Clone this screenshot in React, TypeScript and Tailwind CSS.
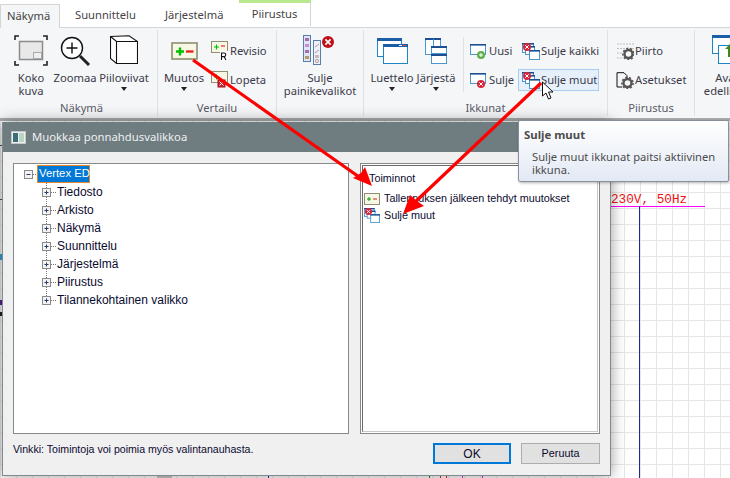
import React from "react";

const ui = "font-['Noto_Sans',sans-serif]";

function Gear({ x, y, r = 4 }: { x: number; y: number; r?: number }) {
  return (
    <g>
      <circle cx={x} cy={y} r={r} fill="none" stroke="#555" strokeWidth={2.4} />
      <circle cx={x} cy={y} r={r + 1.6} fill="none" stroke="#555" strokeWidth={1.6} strokeDasharray="2 1.9" />
    </g>
  );
}

function MiniWin({ x, y, w, h, bar = "#1b4f91" }: { x: number; y: number; w: number; h: number; bar?: string }) {
  return (
    <g>
      <rect x={x + 0.5} y={y + 0.5} width={w} height={h} fill="#fff" stroke="#4a97cc" />
      <rect x={x} y={y} width={w + 1} height={1.6} fill={bar} />
    </g>
  );
}

function Dot({ x, y, c }: { x: number; y: number; c: string }) {
  return (
    <g>
      <circle cx={x} cy={y} r={4} fill={c} />
      <path d={c === "#5fb04a" ? `M${x - 2} ${y}h4M${x} ${y - 2}v4` : `M${x - 1.8} ${y - 1.8}l3.6 3.6M${x + 1.8} ${y - 1.8}l-3.6 3.6`} stroke="#fff" strokeWidth={1} />
    </g>
  );
}

function KokoIcon() {
  return (
    <svg width="34" height="31" viewBox="0 0 34 31" fill="none">
      <path d="M1 5V1h4M29 1h4v4M1 26v4h4M29 30h4v-4" stroke="#222" strokeWidth="1.6" />
      <rect x="5.5" y="6.5" width="23" height="18" fill="#e8e8e8" stroke="#8c8c8c" strokeWidth="1.5" />
      <rect x="19.5" y="17.5" width="8" height="6" fill="#eee" stroke="#aaa" />
    </svg>
  );
}
function ZoomIcon() {
  return (
    <svg width="32" height="32" viewBox="0 0 32 32" fill="none">
      <circle cx="13" cy="13" r="10.5" stroke="#111" strokeWidth="1.4" fill="#fff" />
      <path d="M7.5 13h11M13 7.5v11" stroke="#111" strokeWidth="1.4" />
      <path d="M21 21l9 9" stroke="#222" strokeWidth="3" />
    </svg>
  );
}
function CubeIcon() {
  return (
    <svg width="28" height="30" viewBox="0 0 28 30" fill="none">
      <path d="M.5 1.5L19 .7L27.5 6.5V28.5H6.5L.5 23.5Z" fill="#fff" stroke="#111" strokeWidth="1.1" />
      <path d="M.5 1.5L6.5 6.5H27.5M6.5 6.5V28.5" stroke="#111" strokeWidth="1.1" />
    </svg>
  );
}
function MuutosIcon() {
  return (
    <svg width="27" height="18" viewBox="0 0 27 18" fill="none">
      <rect x="1" y="1" width="25" height="16" fill="#f7f7e6" stroke="#8e8e70" strokeWidth="1.6" />
      <path d="M5 9.5h8M9 5.5v8" stroke="#00c000" strokeWidth="2.4" />
      <path d="M15 9.5h7.5" stroke="#ee2020" strokeWidth="2.4" />
    </svg>
  );
}
function RevisioIcon() {
  return (
    <svg width="18" height="20" viewBox="0 0 18 20" fill="none">
      <rect x=".5" y=".5" width="16" height="11" fill="#f7f7e6" stroke="#8e8e70" />
      <path d="M3 6h5M5.5 3.5v5" stroke="#00c000" strokeWidth="1.2" />
      <path d="M10 5h4" stroke="#ee2020" strokeWidth="1.2" />
      <rect x="9" y="10" width="8" height="10" fill="#fff" />
      <path d="M10.5 19v-7h2.5a1.8 1.8 0 010 3.6h-2.5M13 15.5l2 3.5" stroke="#111" strokeWidth="1.1" />
    </svg>
  );
}
function LopetaIcon() {
  return (
    <svg width="18" height="18" viewBox="0 0 18 18" fill="none">
      <rect x=".5" y=".5" width="16" height="11" fill="#f7f7e6" stroke="#8e8e70" />
      <path d="M3 6h5M5.5 3.5v5" stroke="#00c000" strokeWidth="1.2" />
      <rect x="7" y="9" width="7" height="7" fill="#d22030" stroke="#a01020" />
      <path d="M8.5 10.5l4 4M12.5 10.5l-4 4" stroke="#fff" />
    </svg>
  );
}
function PainikeIcon() {
  return (
    <svg width="34" height="30" viewBox="0 0 34 30" fill="none">
      <rect x=".5" y=".5" width="7" height="26" fill="#dfe6f3" stroke="#5a7ea8" />
      <rect x="2" y="3" width="4" height="3" fill="#a96ab0" />
      <rect x="2" y="9" width="4" height="3" fill="#c88ad0" />
      <rect x="2" y="15" width="4" height="3" fill="#a96ab0" />
      <rect x="2" y="21" width="4" height="3" fill="#b49a70" />
      <rect x="10.5" y="5.5" width="7" height="24" fill="#eef1f7" stroke="#5a7ea8" />
      <path d="M12 12l4-3M12 18l4-3" stroke="#b09a9a" />
      <rect x="12" y="20" width="4" height="3" fill="#c9b9b9" />
      <circle cx="14" cy="26" r="1.6" stroke="#b09a9a" fill="none" />
      <circle cx="25" cy="7" r="6" fill="#c01018" />
      <path d="M22.4 4.4l5.2 5.2M27.6 4.4l-5.2 5.2" stroke="#fff" strokeWidth="1.6" />
    </svg>
  );
}
function LuetteloIcon() {
  return (
    <svg width="31" height="26" viewBox="0 0 31 26" fill="none">
      <rect x=".5" y=".5" width="24" height="18" fill="#fff" stroke="#1d84c6" />
      <rect x="0" y="0" width="25" height="3" fill="#1b5ea8" />
      <rect x="6.5" y="6.5" width="24" height="19" fill="#fff" stroke="#1d84c6" />
      <rect x="6" y="6" width="25" height="3" fill="#1b5ea8" />
      <rect x="22" y="7" width="3" height="1" fill="#fff" />
      <rect x="26" y="7" width="3" height="1" fill="#e44" />
    </svg>
  );
}
function JarjestaIcon() {
  return (
    <svg width="22" height="26" viewBox="0 0 22 26" fill="none">
      <rect x=".5" y=".5" width="15" height="16" fill="#fff" stroke="#4a97cc" />
      <rect x="0" y="0" width="16" height="2" fill="#1b4f91" />
      <path d="M8.5 1v15" stroke="#4a97cc" />
      <rect x="6.5" y="8.5" width="15" height="7" fill="#fff" stroke="#4a97cc" />
      <rect x="6" y="8" width="16" height="2" fill="#1b4f91" />
      <rect x="6.5" y="16.5" width="15" height="9" fill="#fff" stroke="#4a97cc" />
      <rect x="6" y="16" width="16" height="2" fill="#1b4f91" />
    </svg>
  );
}
function WinDot({ c }: { c: string }) {
  return (
    <svg width="18" height="17" viewBox="0 0 18 17" fill="none">
      <MiniWin x={0} y={1} w={15} h={10} />
      <Dot x={11} y={12} c={c} />
    </svg>
  );
}
function CloseStack() {
  return (
    <svg width="18" height="17" viewBox="0 0 18 17" fill="none" className="shrink-0">
      <MiniWin x={0} y={0} w={11} h={9} />
      <MiniWin x={3} y={3} w={9} h={8} />
      <MiniWin x={7} y={7} w={10} h={9} />
      <Dot x={5} y={4} c="#d8253a" />
    </svg>
  );
}
function PiirtoIcon() {
  return (
    <svg width="17" height="17" viewBox="0 0 17 17" fill="none">
      <path d="M.5 1h16M.5 5.5h16M.5 10h6M.5 15h4" stroke="#888" strokeDasharray="1 2" />
      <Gear x={11.5} y={11} />
    </svg>
  );
}
function AsetusIcon() {
  return (
    <svg width="18" height="17" viewBox="0 0 18 17" fill="none">
      <path d="M1 15V.7h7l3 3v3M1 15h5" stroke="#111" fill="none" />
      <Gear x={11.5} y={11} />
    </svg>
  );
}
function AvaaIcon() {
  return (
    <svg width="34" height="30" viewBox="0 0 34 30" fill="none">
      <rect x=".5" y=".5" width="24" height="18" fill="#fff" stroke="#1d84c6" />
      <rect x="0" y="0" width="25" height="3" fill="#1b5ea8" />
      <rect x="6.5" y="10.5" width="20" height="18" fill="#fff" stroke="#1d84c6" />
      <path d="M13 14l6-6 6 6h-3v8h-6v-8z" fill="#3a8a1a" />
    </svg>
  );
}

function Caret() {
  return <div className="mt-[3px] h-0 w-0 border-x-[3.5px] border-t-[4px] border-x-transparent border-t-[#222]" />;
}

function Large({ w, icon, lines, caret }: { w: string; icon: React.ReactNode; lines: string[]; caret?: boolean }) {
  return (
    <div className={`flex flex-col items-center ${w}`}>
      <div className="flex h-[36px] items-start justify-center overflow-visible">{icon}</div>
      {lines.map((l) => (
        <div key={l} className="h-[13px] whitespace-nowrap text-[11.2px] leading-[13px] text-[#3a3a4a]">
          {l}
        </div>
      ))}
      {caret && <Caret />}
    </div>
  );
}

function Small({ icon, label, active, pad = "pl-0" }: { icon: React.ReactNode; label: string; active?: boolean; pad?: string }) {
  return (
    <div className={`flex h-[22px] items-center gap-[1px] whitespace-nowrap text-[11.2px] text-[#3a3a4a] ${pad} ${active ? "border border-[#a9cdf0] bg-[#e6f0fa]" : "border border-transparent"}`}>
      <span className="flex w-[18px] shrink-0 items-center justify-center">{icon}</span>
      <span>{label}</span>
    </div>
  );
}

function Group({ w, label, children }: { w: string; label?: string; children: React.ReactNode }) {
  return (
    <div className={`flex h-[86px] shrink-0 flex-col border-r border-[#dfe2e5] ${w}`}>
      <div className="flex h-[72px] pt-[5px]">{children}</div>
      <div className="pt-[3px] text-center text-[11.2px] leading-[16px] text-[#5b5b68]">{label}</div>
    </div>
  );
}

function SmallCol({ w, children }: { w: string; children: React.ReactNode }) {
  return <div className={`flex flex-col gap-[7px] pt-[5px] ${w}`}>{children}</div>;
}

function Tab({ label, className }: { label: string; className: string }) {
  return <div className={`flex h-[23px] items-center text-[11.2px] text-[#444] ${className}`}>{label}</div>;
}

function Expander({ open, child, last }: { open?: boolean; child?: boolean; last?: boolean }) {
  return (
    <svg width="15" height="18" viewBox="0 0 15 18" fill="none" className="shrink-0">
      {child && <path d={last ? "M4.5 0v9" : "M4.5 0v18"} stroke="#777" strokeDasharray="1 1" />}
      <path d="M9 9.5h6" stroke="#777" strokeDasharray="1 1" />
      <rect x=".5" y="5.5" width="8" height="8" fill="#f3f3f3" stroke="#8a8a8a" />
      <path d="M2.5 9.5h4" stroke="#2a3a6a" />
      {!open && <path d="M4.5 7.5v4" stroke="#2a3a6a" />}
    </svg>
  );
}

const treeItems = ["Tiedosto", "Arkisto", "Näkymä", "Suunnittelu", "Järjestelmä", "Piirustus", "Tilannekohtainen valikko"];

export default function App() {
  return (
    <div className={`relative h-[478px] w-[730px] overflow-hidden bg-white bg-[linear-gradient(to_right,#e6e6e6_1px,transparent_1px),linear-gradient(to_bottom,#e6e6e6_1px,transparent_1px)] bg-[length:16px_16px] ${ui}`}>
      {/* Tab strip */}
      <div className="flex h-[28px] items-end border-b border-[#d5d5d5] bg-white">
        <Tab label="Näkymä" className="relative -mb-px h-[24px] w-[60px] border-x border-t border-[#d5d5d5] bg-[#f5f6f7] pl-[6px]" />
        <Tab label="Suunnittelu" className="ml-[15px] w-[90px]" />
        <Tab label="Järjestelmä" className="w-[74px]" />
        <div className="h-[28px] w-[72px] border-t-[4px] border-[#b9e88f] bg-white">
          <Tab label="Piirustus" className="h-[23px] justify-center border-r border-[#d5d5d5]" />
        </div>
      </div>

      {/* Ribbon */}
      <div className="flex h-[93px] border-b-[3px] border-[#a9acae] bg-[#f5f6f7] pl-[6px] pt-[2px]">
        <Group w="w-[152px]" label="Näkymä">
          <Large w="w-[50px]" icon={<KokoIcon />} lines={["Koko", "kuva"]} />
          <Large w="w-[38px]" icon={<ZoomIcon />} lines={["Zoomaa"]} />
          <Large w="w-[60px]" icon={<CubeIcon />} lines={["Piiloviivat"]} caret />
        </Group>
        <Group w="w-[119px]" label="Vertailu">
          <Large w="w-[52px]" icon={<div className="pt-[7px]"><MuutosIcon /></div>} lines={["Muutos"]} caret />
          <SmallCol w="w-[60px]">
            <Small icon={<RevisioIcon />} label="Revisio" />
            <Small icon={<LopetaIcon />} label="Lopeta" />
          </SmallCol>
        </Group>
        <Group w="w-[87px]">
          <Large w="w-[86px]" icon={<PainikeIcon />} lines={["Sulje", "painikevalikot"]} />
        </Group>
        <Group w="w-[244px]" label="Ikkunat">
          <Large w="w-[56px]" icon={<div className="pt-[3px]"><LuetteloIcon /></div>} lines={["Luettelo"]} caret />
          <Large w="w-[32px]" icon={<div className="pt-[3px]"><JarjestaIcon /></div>} lines={["Järjestä"]} caret />
          <div className="ml-[11px] mt-[2px] h-[55px] w-px bg-[#dfe2e5]" />
          <SmallCol w="w-[54px] pl-[5px]">
            <Small icon={<WinDot c="#5fb04a" />} label="Uusi" />
            <Small icon={<WinDot c="#d8253a" />} label="Sulje" />
          </SmallCol>
          <SmallCol w="w-[81px]">
            <Small icon={<CloseStack />} label="Sulje kaikki" pad="pl-[3px]" />
            <Small icon={<CloseStack />} label="Sulje muut" pad="pl-[3px]" active />
          </SmallCol>
        </Group>
        <Group w="w-[87px]" label="Piirustus">
          <SmallCol w="w-[86px] pl-[7px]">
            <Small icon={<PiirtoIcon />} label="Piirto" />
            <Small icon={<AsetusIcon />} label="Asetukset" />
          </SmallCol>
        </Group>
        <div className="flex h-[72px] shrink-0 pt-[5px]">
          <Large w="w-[66px]" icon={<div className="ml-[1px]"><AvaaIcon /></div>} lines={["Avaa", "edellinen"]} />
        </div>
      </div>

      {/* Drawing behind the dialog */}
      <div className="absolute left-[611px] top-[192px] whitespace-nowrap font-['Liberation_Mono',monospace] text-[12.7px] leading-[16px] text-[#f01010]">230V, 50Hz</div>
      <div className="absolute left-[611px] top-[206px] h-px w-[94px] bg-[#ff00ff]" />
      <div className="absolute left-[639px] top-[206px] h-[272px] w-px bg-[#1a2a9a]" />
      <div className="absolute left-0 top-[145px] h-px w-[2px] bg-[#555]" />
      <div className="absolute left-0 top-[199px] h-px w-[2px] bg-[#555]" />
      <div className="absolute left-0 top-[254px] h-[6px] w-[2px] bg-[#3a9ad0]" />
      <div className="absolute left-0 top-[300px] h-[5px] w-[2px] bg-[#552288]" />
      <div className="absolute left-0 top-[312px] h-[4px] w-[2px] bg-[#222]" />
      <div className="absolute left-[429px] top-[476px] h-[2px] w-px bg-[#1a8a1a]" />
      <div className="absolute left-[440px] top-[476px] h-[2px] w-px bg-[#e02020]" />
      <div className="absolute left-[446px] top-[476px] h-[2px] w-px bg-[#e02020]" />
      <div className="absolute left-[462px] top-[476px] h-[2px] w-px bg-[#e020e0]" />
      <div className="absolute left-[482px] top-[476px] h-[2px] w-px bg-[#e020e0]" />
      <div className="absolute left-[157px] top-[476px] h-[2px] w-[15px] bg-[#c8c8c8]" />
      <div className="absolute left-[268px] top-[476px] h-[2px] w-px bg-[#1a2a9a]" />

      {/* Dialog */}
      <div className="absolute left-[2px] top-[122px] flex h-[354px] w-[609px] flex-col border border-t-0 border-[#7f8a8e] bg-[#f0f0f0] font-['Liberation_Sans',sans-serif] shadow-[0_0_14px_rgba(0,0,0,0.4)]">
        <div className={`flex h-[30px] shrink-0 items-center gap-[6px] bg-[#6f7c80] pl-[8px] pt-[1px] text-[11.3px] text-[#eef1f1] ${ui}`}>
          <svg width="15" height="13" viewBox="0 0 15 13" fill="none">
            <rect x=".5" y=".5" width="14" height="12" fill="#eef0f0" stroke="#c4c8c8" />
            <rect x="2" y="2" width="5" height="9" fill="#3c6e78" />
            <rect x="8" y="2" width="5" height="9" fill="#b9d5c4" />
          </svg>
          <span>Muokkaa ponnahdusvalikkoa</span>
        </div>
        <div className="flex h-[282px] shrink-0 gap-[11px] pl-[10px] pt-[11px] text-[12px] text-[#0a0a30]">
          <div className="h-[271px] w-[336px] border border-[#85898c] bg-white pt-px">
            <div className="flex h-[18px] items-center pl-[10px]">
              <Expander open />
              <span className="-ml-[2px] flex h-[18px] w-[53px] items-center whitespace-nowrap border border-[#e8862a] bg-[#0078d7] px-px text-[11.3px] leading-none text-white">Vertex ED</span>
            </div>
            {treeItems.map((t, i) => (
              <div key={t} className="flex h-[18px] items-center pl-[28px]">
                <Expander child last={i === treeItems.length - 1} />
                <span className="whitespace-nowrap">{t}</span>
              </div>
            ))}
          </div>
          <div className="h-[271px] w-[240px] border border-[#85898c] bg-white p-px">
            <div className="h-full border border-b-[#c8c8c8] border-l-[#6a6a6a] border-r-[#c8c8c8] border-t-[#6a6a6a] pl-[1px] pt-[4px] text-[10.8px]">
              <div className="h-[17px] pl-[5px] leading-[17px]">Toiminnot</div>
              <div className="mt-[3px] flex h-[17px] items-center gap-[4px]">
                <svg width="16" height="12" viewBox="0 0 16 12" fill="none" className="shrink-0">
                  <rect x=".5" y=".5" width="15" height="11" fill="#f7f7e6" stroke="#8e8e70" />
                  <path d="M3 6h4M5 4v4" stroke="#00a000" />
                  <path d="M9 6h4" stroke="#e02020" />
                </svg>
                <span className="whitespace-nowrap">Tallennuksen jälkeen tehdyt muutokset</span>
              </div>
              <div className="flex h-[17px] items-center gap-[4px]">
                <svg width="16" height="15" viewBox="0 0 18 17" fill="none" className="shrink-0">
                  <MiniWin x={0} y={0} w={11} h={9} />
                  <MiniWin x={3} y={3} w={9} h={8} />
                  <MiniWin x={7} y={7} w={10} h={9} />
                  <Dot x={5} y={4} c="#d8253a" />
                </svg>
                <span>Sulje muut</span>
              </div>
            </div>
          </div>
        </div>
        <div className="flex items-start pl-[10px] pt-[9px] text-[10.8px] text-[#0a0a30]">
          <span className="-mt-[1px] w-[420px] whitespace-nowrap text-[10.6px] leading-[14px]">Vinkki: Toimintoja voi poimia myös valintanauhasta.</span>
          <div className="flex h-[21px] w-[78px] items-center justify-center border-2 border-[#0078d7] bg-[#e1e1e1] text-[12px]">OK</div>
          <div className="ml-[10px] flex h-[21px] w-[79px] items-center justify-center border border-[#adadad] bg-[#e1e1e1]">Peruuta</div>
        </div>
      </div>

      {/* Tooltip */}
      <div className="absolute left-[518px] top-[120px] h-[62px] w-[211px] rounded-[2px] border border-[#8a9098] bg-gradient-to-b from-white to-[#e3e9f4] pl-[5px] pt-[6px] text-[11.2px] text-[#4c4c4c] shadow-[1px_1px_3px_rgba(0,0,0,0.3)]">
        <div className="text-[11.4px] font-bold leading-[16px]">Sulje muut</div>
        <div className="mt-[7px] pl-[8px] leading-[13px]">Sulje muut ikkunat paitsi aktiivinen ikkuna.</div>
      </div>

      {/* Annotation arrows */}
      <svg className="pointer-events-none absolute inset-0" width="730" height="478" viewBox="0 0 730 478" fill="none">
        <path d="M193 60L362 179" stroke="#f00" strokeWidth="3.2" />
        <path d="M372 186L353 178L361 173L365 167Z" fill="#f00" />
        <path d="M541 83L413 204" stroke="#f00" strokeWidth="3.2" />
        <path d="M403 214L410 195L417 201L424 206Z" fill="#f00" />
      </svg>

      {/* Mouse cursor */}
      <svg className="pointer-events-none absolute left-[541px] top-[81px]" width="14" height="20" viewBox="0 0 14 20">
        <path d="M1.5 1v14l3.5-3 2.5 6 2.5-1-2.5-6h4.5z" fill="#fff" stroke="#111" strokeWidth="1" />
      </svg>
    </div>
  );
}
